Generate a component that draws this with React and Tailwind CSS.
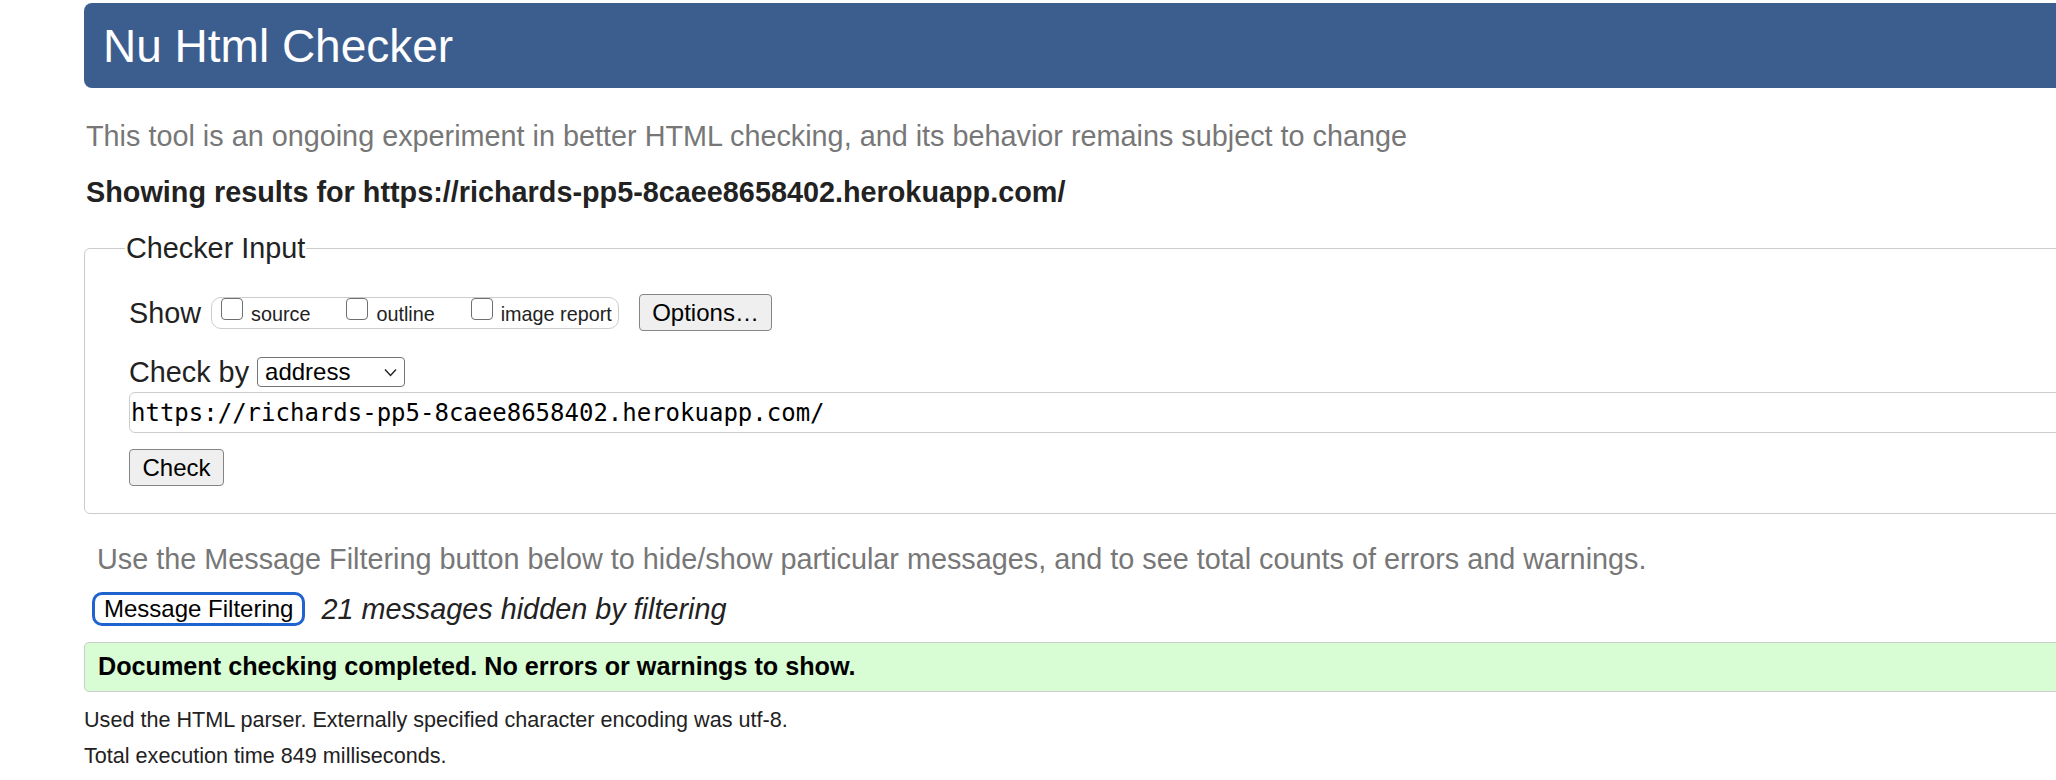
import React from 'react';

const options = [
  { label: 'source' },
  { label: 'outline' },
  { label: 'image report' },
];

function Checkbox() {
  return <span className="block w-[22px] h-[22px] shrink-0 rounded-[4px] border-[1.5px] border-[#6f6f6f] bg-white" />;
}

export default function App() {
  const url = 'https://richards-pp5-8caee8658402.herokuapp.com/';

  return (
    <div className="w-[2056px] h-[780px] overflow-hidden bg-white font-['Liberation_Sans',Arial,sans-serif] text-[#222]">
      <div className="ml-[84px] w-[2100px]">
        {/* title bar */}
        <header className="mt-[3px] h-[85px] rounded-[8px] bg-[#3c5e8f] flex items-center pl-[19px]">
          <h1 className="text-[46px] leading-none text-white">Nu Html Checker</h1>
        </header>

        <p className="mt-[33px] pl-[2px] text-[28.8px] leading-[30px] text-[#777]">
          This tool is an ongoing experiment in better HTML checking, and its behavior remains subject to change
        </p>

        <p className="mt-[25px] pl-[2px] text-[28.8px] leading-[32px] font-bold text-[#222]">
          Showing results for {url}
        </p>

        <fieldset className="mt-[24px] border border-[#ccc] rounded-[6px] pl-[44px] pt-[30px] pb-[27px]">
          <legend className="-ml-[4px] px-[1px] text-[28.8px] leading-[32px] text-[#222]">Checker Input</legend>

          <div className="flex items-center h-[37px] text-[28.8px] leading-[32px]">
            <span>Show</span>
            <div className="ml-[10px] h-[32px] w-[408px] border border-[#ccc] rounded-[10px] flex items-start pl-[9px]">
              {options.map((o, i) => (
                <div key={o.label} className={'flex items-start ' + (i > 0 ? 'ml-[36px]' : '')}>
                  <Checkbox />
                  <span className="ml-[8px] mt-[4px] text-[19.8px] leading-[24px]">{o.label}</span>
                </div>
              ))}
            </div>
            <button className="ml-[20px] w-[133px] h-[37px] rounded-[4px] border border-[#858585] bg-[#efefef] text-[24px] leading-none text-black">
              Options…
            </button>
          </div>

          <div className="mt-[26px] flex items-center h-[30px] text-[28.8px] leading-[32px]">
            <span>Check by</span>
            <div className="ml-[8px] w-[148px] h-[30px] border border-[#767676] rounded-[4px] flex items-center justify-between pl-[7px] pr-[7px] text-[24px] leading-none text-black">
              <span>address</span>
              <svg width="13" height="9" viewBox="0 0 13 9" fill="none">
                <path d="M1 1.5l5.5 6 5.5-6" stroke="#222" strokeWidth="1.4" />
              </svg>
            </div>
          </div>

          <div className="mt-[5px] h-[41px] w-[2000px] border border-[#ccc] rounded-[6px] flex items-center pl-[1px] font-['DejaVu_Sans_Mono',monospace] text-[24px] leading-none text-black">
            {url}
          </div>

          <button className="mt-[16px] block w-[95px] h-[37px] rounded-[4px] border border-[#858585] bg-[#efefef] text-[24px] leading-none text-black">
            Check
          </button>
        </fieldset>

        <p className="mt-[30px] pl-[13px] text-[28.8px] leading-[30px] text-[#777]">
          Use the Message Filtering button below to hide/show particular messages, and to see total counts of errors and warnings.
        </p>

        <div className="mt-[18px] pl-[8px] flex items-center">
          <button className="h-[34px] px-[9px] rounded-[10px] border-[3px] border-[#1f63cf] bg-white text-[24px] leading-none text-black">
            Message Filtering
          </button>
          <span className="ml-[16px] text-[28.8px] leading-[32px] italic text-[#222]">21 messages hidden by filtering</span>
        </div>

        <div className="mt-[16px] h-[50px] border border-[#ccc] rounded-[5px] bg-[#d8fcd3] flex items-center pl-[13px] text-[25.2px] font-bold text-black">
          Document checking completed. No errors or warnings to show.
        </div>

        <p className="mt-[9.5px] text-[21.6px] leading-[36px] text-[#222]">
          Used the HTML parser. Externally specified character encoding was utf-8.
        </p>
        <p className="text-[21.6px] leading-[36px] text-[#222]">Total execution time 849 milliseconds.</p>
      </div>
    </div>
  );
}
